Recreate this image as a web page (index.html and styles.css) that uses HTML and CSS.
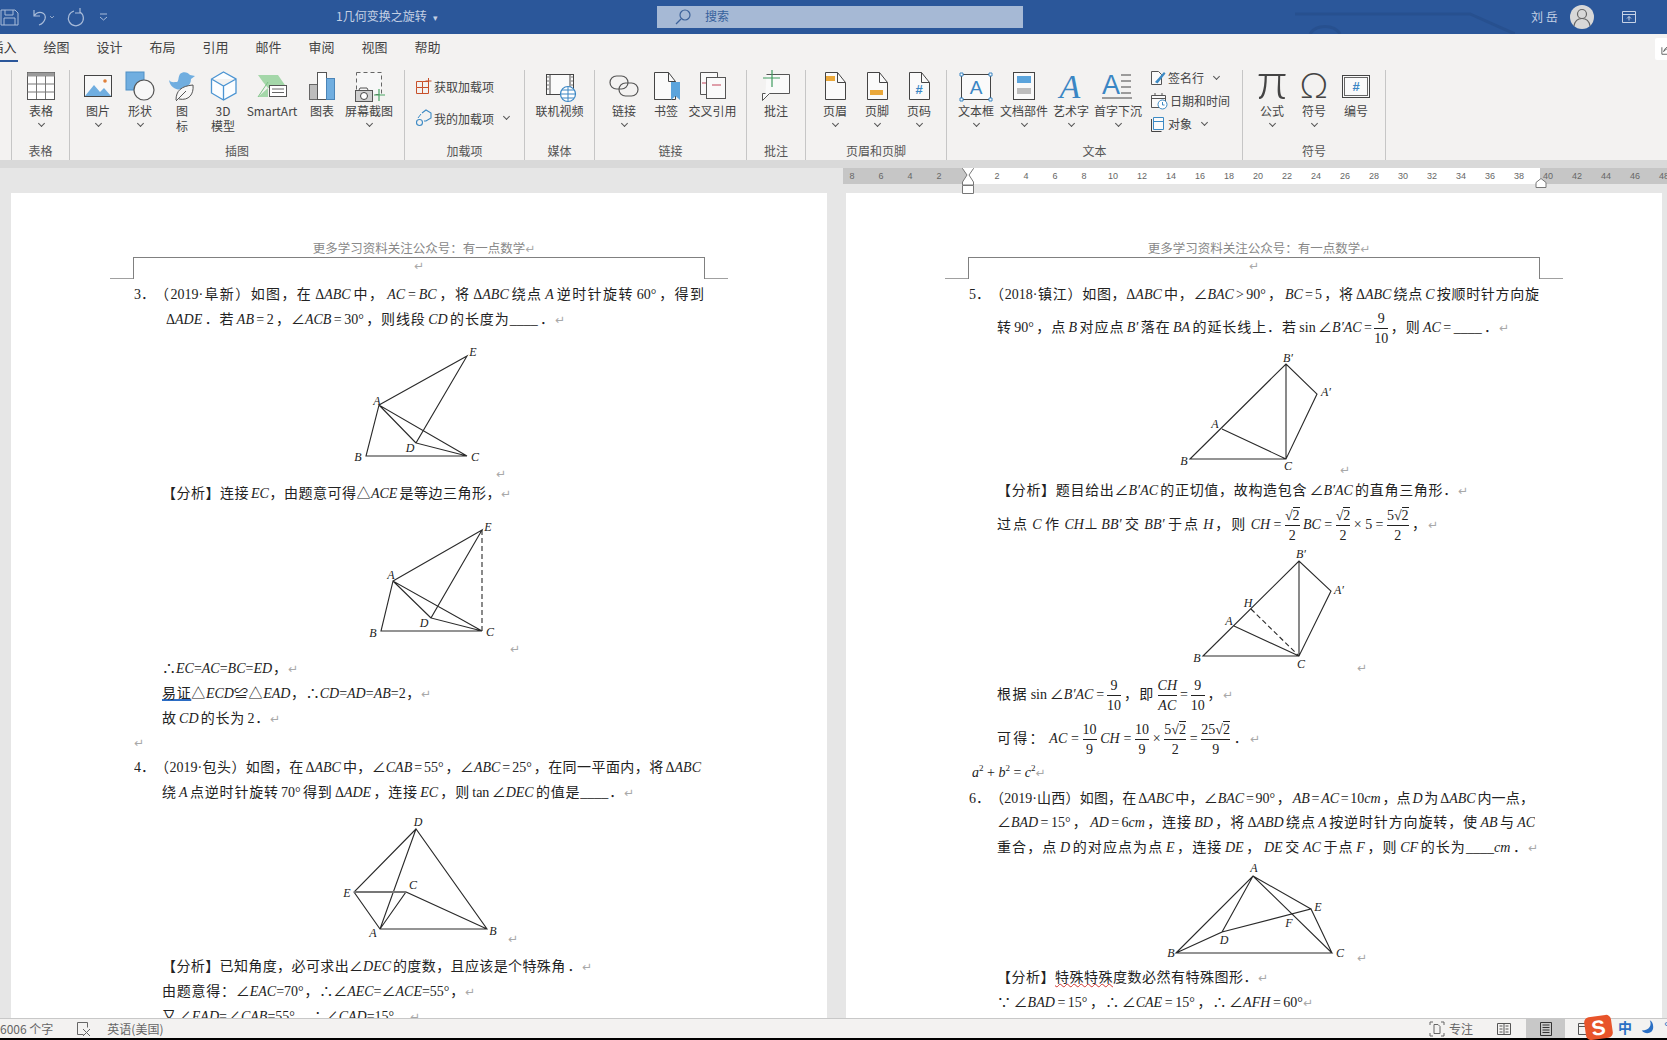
FILE: index.html
```html
<!DOCTYPE html>
<html lang="zh-CN">
  <head>
    <meta charset="UTF-8" />
    <title>1几何变换之旋转 - Word</title>
    <link rel="stylesheet" href="styles.css">
  </head>
  <body>
    <header class="titlebar">
      <div class="qat">
        <svg class="qat-save" width="20" height="20" viewBox="0 0 20 20"><path d="M1 3h14l3 3v12H1zM5 3v5h8V3M4 18v-7h11v7" fill="none" stroke="#a9bcd9"/></svg>
        <svg width="26" height="20" viewBox="0 0 26 20"><path d="M3 3v6h6M3 9c4-6 13-4 11 3-1 3-3 5-6 6" fill="none" stroke="#a9bcd9" stroke-width="1.2"/><path d="M19 9l2 2 2-2" fill="none" stroke="#8ea5c8"/></svg>
        <svg class="qat-redo" width="22" height="20" viewBox="0 0 22 20"><path d="M9 4a7.500 7.500 0 1 0 6 1M15 1v5h-5" fill="none" stroke="#a9bcd9" stroke-width="1.2"/></svg>
        <svg class="qat-more" width="12" height="20" viewBox="0 0 12 20"><path d="M2 7h7M2 10l3.500 3L9 10" fill="none" stroke="#a9bcd9"/></svg>
      </div>
      <div class="doc-title">1几何变换之旋转 <span class="caret">▾</span></div>
      <div class="search">
        <svg width="18" height="18" viewBox="0 0 18 18"><circle cx="11" cy="7" r="5" fill="none" stroke="#3d6299" stroke-width="1.200"/><path d="M7 11l-5 5" stroke="#3d6299" stroke-width="1.200"/></svg>
        <span class="search-text">搜索</span>
      </div>
      <svg class="title-art" width="220" height="34" viewBox="0 0 220 34"><path d="M0 14h175l45 20M15 34c6-10 24-10 30 0" fill="none" stroke="#27508f" stroke-width="3"/></svg>
      <div class="user">
        <span class="user-name">刘 岳</span>
        <span class="avatar"><svg width="24" height="24" viewBox="0 0 24 24"><circle cx="12" cy="9" r="4.500" fill="none" stroke="#666" stroke-width="1.200"/><path d="M4 21c1-6 4-7.500 8-7.500s7 1.500 8 7.500" fill="none" stroke="#666" stroke-width="1.200"/></svg></span>
        <svg class="display-opt" width="16" height="14" viewBox="0 0 16 14"><path d="M1.500 1.500h13v11h-13zM1.500 4.500h13M8 6.500v4M6 8.500l2-2 2 2" fill="none" stroke="#c6d2e6"/></svg>
      </div>
    </header>

    <nav class="tabs">
      <span class="tab active">插入</span>
      <span class="tab">绘图</span>
      <span class="tab">设计</span>
      <span class="tab">布局</span>
      <span class="tab">引用</span>
      <span class="tab">邮件</span>
      <span class="tab">审阅</span>
      <span class="tab">视图</span>
      <span class="tab">帮助</span>
      <span class="share"><svg width="16" height="16" viewBox="0 0 16 16"><path d="M1 6v8h12M3 11c1-4 4-6 8-6V2l5 4-5 4V7c-3 0-6 1-8 4z" fill="none" stroke="#555"/></svg></span>
    </nav>

    <section class="ribbon">
      <div class="group g-start"></div>

      <div class="group g-table">
        <div class="group-body">
          <div class="btn w58">
            <svg class="icon" viewBox="0 0 36 34"><rect x="4.500" y="2.500" width="27" height="27" fill="#fff" stroke="#555"/><rect x="4.500" y="2.500" width="27" height="4" fill="#9a9a9a"/><path d="M4.500 14h27M4.500 22h27M13.500 6v23M22.500 6v23" stroke="#777"/></svg>
            <span class="label">表格</span><i class="chev"></i>
          </div>
        </div>
        <div class="group-label">表格</div>
      </div>

      <div class="group g-illus">
        <div class="group-body">
          <div class="btn">
            <svg class="icon" viewBox="0 0 36 34"><rect x="4.500" y="5.500" width="27" height="21" fill="#f8f8f8" stroke="#444"/><path d="M5 26l9-11 6 7 4-4 7 8z" fill="#70aee0"/><circle cx="25" cy="11" r="1.800" fill="#e0803a"/></svg>
            <span class="label">图片</span><i class="chev"></i>
          </div>
          <div class="btn">
            <svg class="icon" viewBox="0 0 36 34"><rect x="4" y="2" width="18" height="18" fill="#70aee0" stroke="#4f8fc6"/><circle cx="22" cy="20" r="10" fill="#f7f7f7" stroke="#555" stroke-width="1.200"/></svg>
            <span class="label">形状</span><i class="chev"></i>
          </div>
          <div class="btn">
            <svg class="icon" viewBox="0 0 36 34"><path d="M5 10c2 3 5 2 8 2 2-1 1-5 3-8 3-3 8-2 10 1l5 1-4 3c0 4-2 6-3 7-4 5-17 6-19-6z" fill="#70aee0"/><path d="M12 30c0-9 5-14 17-15 1 9-4 16-14 14" fill="#f7f7f7" stroke="#555"/><path d="M12 31l10-10" stroke="#555"/></svg>
            <span class="label">图<br>标</span>
          </div>
          <div class="btn w40">
            <svg class="icon" viewBox="0 0 36 34"><path d="M18.500 2L31 9v14l-12.500 7L6.500 23V9zM6.500 9l12 7 12.500-7M18.500 16v14" fill="#fbfdff" stroke="#4b94d2" stroke-width="1.300"/></svg>
            <span class="label">3D<br>模型</span>
          </div>
          <div class="btn w58">
            <svg class="icon" viewBox="0 0 36 34"><path d="M4 5h20l9 13H14l-5-6z M4 27l10-9v9z" fill="#a4d7a9"/><path d="M4 27l10-15" stroke="#7cc285"/><rect x="15.500" y="15.500" width="17" height="11" fill="#fff" stroke="#555"/><path d="M18 19h12M18 22.500h12" stroke="#666"/></svg>
            <span class="label">SmartArt</span>
          </div>
          <div class="btn">
            <svg class="icon" viewBox="0 0 36 34"><rect x="5.500" y="14.500" width="8" height="15" fill="#bdbdbd" stroke="#666"/><rect x="13.500" y="2.500" width="9" height="27" fill="#fff" stroke="#555"/><rect x="22.500" y="8.500" width="8" height="21" fill="#70aee0" stroke="#4b85b8"/></svg>
            <span class="label">图表</span>
          </div>
          <div class="btn w52">
            <svg class="icon" viewBox="0 0 36 34"><rect x="5.500" y="2.500" width="25" height="22" fill="#f7f7f7" stroke="#666" stroke-dasharray="4 3"/><rect x="4.500" y="20.500" width="17" height="11" fill="#cfcfcf" stroke="#555"/><circle cx="13" cy="26" r="3.500" fill="#fff" stroke="#444"/><path d="M8 20l1-2h7l1 2" fill="none" stroke="#555"/><path d="M28 19v12M23 25h11" stroke="#4aa564" stroke-width="1.200"/></svg>
            <span class="label">屏幕截图</span><i class="chev"></i>
          </div>
        </div>
        <div class="group-label">插图</div>
      </div>

      <div class="group g-addin">
        <div class="small-col addin-col">
          <div class="small-row">
            <svg width="16" height="18" viewBox="0 0 16 18"><path d="M.5 4.500h6v6h-6zM6.500 4.500h6v12h-12v-6M6.500 10.500v6M12.500 10.500h-6M12.500 1v6M9.500 4h6" fill="none" stroke="#c8502a"/></svg>
            <span>获取加载项</span>
          </div>
          <div class="small-row">
            <svg width="16" height="18" viewBox="0 0 16 18"><path d="M6 4l4-3 5 3v5l-5 3H8" fill="none" stroke="#3c8ac4" stroke-width="1.100"/><circle cx="3.500" cy="13.500" r="3" fill="none" stroke="#3c8ac4" stroke-width="1.100"/><path d="M2 9l3-4" stroke="#3c8ac4"/></svg>
            <span>我的加载项</span><i class="chev chev-side"></i>
          </div>
        </div>
        <div class="group-label">加载项</div>
      </div>

      <div class="group g-media">
        <div class="group-body center">
          <div class="btn w70">
            <svg class="icon" viewBox="0 0 36 34"><rect x="4.500" y="4.500" width="27" height="20" fill="#fafafa" stroke="#444"/><path d="M8 4.500v20M28 4.500v20" stroke="#444"/><path d="M5 7h2M5 11h2M5 15h2M5 19h2M29 7h2M29 11h2M29 15h2" stroke="#777"/><circle cx="26" cy="24" r="7.500" fill="#fff" stroke="#3a86c4" stroke-width="1.200"/><path d="M18.500 24h15M26 16.500v15M20 20h12M20 28h12" stroke="#3a86c4"/></svg>
            <span class="label">联机视频</span>
          </div>
        </div>
        <div class="group-label">媒体</div>
      </div>

      <div class="group g-links">
        <div class="group-body">
          <div class="btn">
            <svg class="icon" viewBox="0 0 36 34"><rect x="4" y="6" width="18" height="13" rx="6.500" fill="none" stroke="#555" stroke-width="1.200"/><rect x="13" y="13" width="19" height="13" rx="6.500" fill="none" stroke="#555" stroke-width="1.200"/></svg>
            <span class="label">链接</span><i class="chev"></i>
          </div>
          <div class="btn">
            <svg class="icon" viewBox="0 0 36 34"><path d="M6.500 2.500h14l7 9v18h-21z" fill="#fafafa" stroke="#444"/><path d="M20.500 2.500v9h7" fill="none" stroke="#444"/><path d="M23 12h9v18l-4.500-4-4.500 4z" fill="#5ba4dc"/></svg>
            <span class="label">书签</span>
          </div>
          <div class="btn w51">
            <svg class="icon" viewBox="0 0 36 34"><path d="M5.500 2.500h17v22h-17z" fill="#fafafa" stroke="#555"/><rect x="11.500" y="7.500" width="19" height="21" fill="#fafafa" stroke="#555"/><path d="M7 13h4M17 15h9" stroke="#c4455a" stroke-width="1.200"/></svg>
            <span class="label">交叉引用</span>
          </div>
        </div>
        <div class="group-label">链接</div>
      </div>

      <div class="group g-note">
        <div class="group-body">
          <div class="btn w58">
            <svg class="icon" viewBox="0 0 36 34"><path d="M8.500 4.500h23v19h-20l-7 7v-7h3" fill="#fafafa" stroke="#555"/><path d="M14 0v17M5 8h17" stroke="#3f9c5f" stroke-width="1.200"/></svg>
            <span class="label">批注</span>
          </div>
        </div>
        <div class="group-label">批注</div>
      </div>

      <div class="group g-hf">
        <div class="group-body">
          <div class="btn">
            <svg class="icon" viewBox="0 0 36 34"><path d="M8.500 2.500h12l8 10v17h-20z" fill="#fafafa" stroke="#444"/><path d="M20.500 2.500v10h8" fill="none" stroke="#444"/><rect x="9" y="6" width="9" height="5" fill="#eaa83a"/></svg>
            <span class="label">页眉</span><i class="chev"></i>
          </div>
          <div class="btn">
            <svg class="icon" viewBox="0 0 36 34"><path d="M8.500 2.500h12l8 10v17h-20z" fill="#fafafa" stroke="#444"/><path d="M20.500 2.500v10h8" fill="none" stroke="#444"/><rect x="11" y="20" width="13" height="5" fill="#eaa83a"/></svg>
            <span class="label">页脚</span><i class="chev"></i>
          </div>
          <div class="btn">
            <svg class="icon" viewBox="0 0 36 34"><path d="M8.500 2.500h12l8 10v17h-20z" fill="#fafafa" stroke="#444"/><path d="M20.500 2.500v10h8" fill="none" stroke="#444"/><text x="18" y="24" class="svg-hash">#</text></svg>
            <span class="label">页码</span><i class="chev"></i>
          </div>
        </div>
        <div class="group-label">页眉和页脚</div>
      </div>

      <div class="group g-text">
        <div class="group-body">
          <div class="btn w46">
            <svg class="icon" viewBox="0 0 36 34"><rect x="3.500" y="4.500" width="29" height="25" fill="#fafafa" stroke="#444"/><path d="M2 3h3v3H2zM31 3h3v3h-3zM2 28h3v3H2zM31 28h3v3h-3z" fill="#fff" stroke="#3a86c4"/><text x="18" y="24" class="svg-a">A</text></svg>
            <span class="label">文本框</span><i class="chev"></i>
          </div>
          <div class="btn w50">
            <svg class="icon" viewBox="0 0 36 34"><rect x="7.500" y="2.500" width="21" height="27" fill="#fafafa" stroke="#444"/><rect x="11" y="6" width="14" height="7" fill="#5ba4dc"/><rect x="11" y="18" width="14" height="6" fill="#bdbdbd"/></svg>
            <span class="label">文档部件</span><i class="chev"></i>
          </div>
          <div class="btn w44">
            <svg class="icon" viewBox="0 0 36 34"><text x="17" y="28" class="svg-wordart">A</text></svg>
            <span class="label">艺术字</span><i class="chev"></i>
          </div>
          <div class="btn w50">
            <svg class="icon" viewBox="0 0 36 34"><text x="11" y="24" class="svg-drop">A</text><path d="M21 5h10M21 11h10M21 17h10M21 23h10M2 28h30" stroke="#444"/></svg>
            <span class="label">首字下沉</span><i class="chev"></i>
          </div>
          <div class="small-col text-col">
            <div class="small-row">
              <svg width="16" height="16" viewBox="0 0 16 16"><path d="M1.500 1.500h7l3 3v10h-10z" fill="#fafafa" stroke="#555"/><path d="M5 12l9-10 1.500 1.500-8 10z" fill="#3c8ac4"/></svg>
              <span>签名行</span><i class="chev chev-side"></i>
            </div>
            <div class="small-row">
              <svg width="18" height="18" viewBox="0 0 18 18"><path d="M1.500 3.500h14v12h-14zM1.500 6.500h14M5 1v3M12 1v3" fill="#fafafa" stroke="#555"/><circle cx="12.500" cy="12.500" r="4.500" fill="#fff" stroke="#3c8ac4"/><path d="M12.500 10v3h2" fill="none" stroke="#3c8ac4"/></svg>
              <span>日期和时间</span>
            </div>
            <div class="small-row">
              <svg width="16" height="16" viewBox="0 0 16 16"><path d="M3.500 1.500h10v12h-10z" fill="#fafafa" stroke="#3c8ac4"/><path d="M3.500 5.500h10" stroke="#3c8ac4"/><path d="M1.500 3v12.500h10" fill="none" stroke="#444"/></svg>
              <span>对象</span><i class="chev chev-side"></i>
            </div>
          </div>
        </div>
        <div class="group-label">文本</div>
      </div>

      <div class="group g-sym">
        <div class="group-body">
          <div class="btn">
            <svg class="icon" viewBox="0 0 36 34"><text x="18" y="29" class="svg-sym svg-pi">π</text></svg>
            <span class="label">公式</span><i class="chev"></i>
          </div>
          <div class="btn">
            <svg class="icon" viewBox="0 0 36 34"><text x="18" y="28" class="svg-sym">Ω</text></svg>
            <span class="label">符号</span><i class="chev"></i>
          </div>
          <div class="btn">
            <svg class="icon" viewBox="0 0 36 34"><rect x="4.500" y="5.500" width="27" height="22" fill="#fafafa" stroke="#444"/><rect x="6.500" y="7.500" width="23" height="18" fill="none" stroke="#666"/><text x="18" y="21" class="svg-hash">#</text></svg>
            <span class="label">编号</span>
          </div>
        </div>
        <div class="group-label">符号</div>
      </div>
    </section>

    <main class="workspace">
      <div class="ruler">
        <span>8</span><span>6</span><span>4</span><span>2</span><span></span>
        <span>2</span><span>4</span><span>6</span><span>8</span><span>10</span><span>12</span>
        <span>14</span><span>16</span><span>18</span><span>20</span><span>22</span><span>24</span>
        <span>26</span><span>28</span><span>30</span><span>32</span><span>34</span><span>36</span>
        <span>38</span><span>40</span><span>42</span><span>44</span><span>46</span><span>48</span>
        <svg class="marker-first" width="14" height="29" viewBox="0 0 14 29"><path d="M1.500.5h11v3L8 10l4.500 7v3h-11v-3L6 10 1.500 3.500zM1.500 20.500h11v8h-11z" fill="#fff" stroke="#777"/></svg>
        <svg class="marker-right" width="12" height="10" viewBox="0 0 12 10"><path d="M6 .5l5 4v5H1v-5z" fill="#fff" stroke="#777"/></svg>
      </div>

      <div class="pages">
        <article class="page">
          <div class="page-head">更多学习资料关注公众号：有一点数学<span class="ret">↵</span></div>
          <div class="head-rule"><span class="ret">↵</span></div>

          <div class="ln first"><span class="num">3．</span><div class="just w549">（2019·阜新）如图，在 Δ<i>ABC</i> 中， <i>AC</i> = <i>BC</i> ，将 Δ<i>ABC</i> 绕点 <i>A</i> 逆时针旋转 60° ，得到</div></div>
          <div class="ln ind-in just w399">Δ<i>ADE</i> ．若 <i>AB</i> = 2 ，∠<i>ACB</i> = 30° ，则线段 <i>CD</i> 的长度为____ ．<span class="ret">↵</span></div>

          <svg class="fig" width="816" height="149" viewBox="11 332 816 149">
            <path class="edge" d="M379 405L467 356L416 443L467 456L379 405L366 456H467M379 405L416 443"/>
            <text x="473" y="356">E</text><text x="377" y="405">A</text><text x="358" y="461">B</text><text x="410" y="452">D</text><text x="475" y="461">C</text>
            <text x="501" y="478" class="fig-ret">↵</text>
          </svg>

          <div class="ln ind just w349">【分析】连接 <i>EC</i>，由题意可得△<i>ACE</i> 是等边三角形，<span class="ret">↵</span></div>

          <svg class="fig" width="816" height="150" viewBox="11 506 816 150">
            <path class="edge" d="M393 581L482 530L431 618L482 631L393 581L381 631H482M393 581L431 618"/>
            <path class="edge dash" d="M482 530V631"/>
            <text x="488" y="531">E</text><text x="391" y="579">A</text><text x="424" y="627">D</text><text x="373" y="637">B</text><text x="490" y="636">C</text>
            <text x="515" y="653" class="fig-ret">↵</text>
          </svg>

          <div class="ln ind just w136">∴<i>EC</i>=<i>AC</i>=<i>BC</i>=<i>ED</i>，<span class="ret">↵</span></div>
          <div class="ln ind just w269"><span class="blue-mark">易证</span>△<i>ECD</i>≌△<i>EAD</i>，∴<i>CD</i>=<i>AD</i>=<i>AB</i>=2，<span class="ret">↵</span></div>
          <div class="ln ind just w118">故 <i>CD</i> 的长为 2．<span class="ret">↵</span></div>
          <div class="ln tall-24"><span class="ret">↵</span></div>
          <div class="ln"><span class="num">4．</span><div class="just w546">（2019·包头）如图，在 Δ<i>ABC</i> 中，∠<i>CAB</i> = 55° ，∠<i>ABC</i> = 25° ，在同一平面内，将 Δ<i>ABC</i></div></div>
          <div class="ln ind just w472">绕 <i>A</i> 点逆时针旋转 70° 得到 Δ<i>ADE</i> ，连接 <i>EC</i> ，则 tan ∠<i>DEC</i> 的值是____．<span class="ret">↵</span></div>

          <svg class="fig" width="816" height="149" viewBox="11 805 816 149">
            <path class="edge" d="M416 829L354 892L380 929L487 929L416 829L380 929L406 892L487 929"/>
            <path class="edge thick" d="M354 892H406"/>
            <text x="418" y="826">D</text><text x="347" y="897">E</text><text x="413" y="889">C</text><text x="373" y="937">A</text><text x="493" y="935">B</text>
            <text x="513" y="943" class="fig-ret">↵</text>
          </svg>

          <div class="ln ind just w430">【分析】已知角度，必可求出∠<i>DEC</i> 的度数，且应该是个特殊角 ．<span class="ret">↵</span></div>
          <div class="ln ind just w313">由题意得：∠<i>EAC</i>=70°，∴∠<i>AEC</i>=∠<i>ACE</i>=55°，<span class="ret">↵</span></div>
          <div class="ln ind just w258">又 ∠<i>EAD</i>=∠<i>CAB</i>=55° ，∴∠<i>CAD</i>=15° ，<span class="ret">↵</span></div>
        </article>

        <article class="page">
          <div class="page-head">更多学习资料关注公众号：有一点数学<span class="ret">↵</span></div>
          <div class="head-rule"><span class="ret">↵</span></div>

          <div class="ln first"><span class="num">5．</span><div class="just w549">（2018·镇江）如图，Δ<i>ABC</i> 中，∠<i>BAC</i> &gt; 90° ， <i>BC</i> = 5 ，将 Δ<i>ABC</i> 绕点 <i>C</i> 按顺时针方向旋</div></div>
          <div class="ln ind tall-42 just w512">转 90° ，点 <i>B</i> 对应点 <i>B′</i> 落在 <i>BA</i> 的延长线上．若 sin ∠<i>B′AC</i> = <span class="frac"><span class="top">9</span><span>10</span></span> ，则 <i>AC</i> = ____ ．<span class="ret">↵</span></div>

          <svg class="fig" width="816" height="129" viewBox="846 350 816 129">
            <path class="edge" d="M1190 460L1286 365L1317 395L1286 460ZM1286 365V460M1222 430L1286 460"/>
            <text x="1288" y="363" >B′</text><text x="1326" y="397">A′</text><text x="1215" y="429">A</text><text x="1184" y="466">B</text><text x="1288" y="471">C</text>
            <text x="1345" y="475" class="fig-ret">↵</text>
          </svg>

          <div class="ln ind just w471">【分析】题目给出∠<i>B′AC</i> 的正切值，故构造包含 ∠<i>B′AC</i> 的直角三角形．<span class="ret">↵</span></div>
          <div class="ln ind tall-44 just w441">过点 <i>C</i> 作 <i>CH</i>⊥ <i>BB′</i> 交 <i>BB′</i> 于点 <i>H</i>，则 <i>CH</i> = <span class="frac"><span class="top"><span class="rad">√<span>2</span></span></span><span>2</span></span> <i>BC</i> = <span class="frac"><span class="top"><span class="rad">√<span>2</span></span></span><span>2</span></span> × 5 = <span class="frac"><span class="top">5<span class="rad">√<span>2</span></span></span><span>2</span></span> ，<span class="ret">↵</span></div>

          <svg class="fig" width="816" height="125" viewBox="846 547 816 125">
            <path class="edge" d="M1203 656L1299 561L1331 591L1299 656ZM1299 561V656M1234 626L1299 656"/>
            <path class="edge dash" d="M1251 609L1299 656"/>
            <text x="1301" y="558">B′</text><text x="1339" y="594">A′</text><text x="1248" y="607">H</text><text x="1229" y="625">A</text><text x="1197" y="662">B</text><text x="1301" y="668">C</text>
            <text x="1362" y="672" class="fig-ret">↵</text>
          </svg>

          <div class="ln ind tall-46 just w236">根据 sin ∠<i>B′AC</i> = <span class="frac"><span class="top">9</span><span>10</span></span> ，即 <span class="frac"><span class="top"><i>CH</i></span><span><i>AC</i></span></span> = <span class="frac"><span class="top">9</span><span>10</span></span> ，<span class="ret">↵</span></div>
          <div class="ln ind tall-42 just w263">可得： <i>AC</i> = <span class="frac"><span class="top">10</span><span>9</span></span> <i>CH</i> = <span class="frac"><span class="top">10</span><span>9</span></span> × <span class="frac"><span class="top">5<span class="rad">√<span>2</span></span></span><span>2</span></span> = <span class="frac"><span class="top">25<span class="rad">√<span>2</span></span></span><span>9</span></span> ．<span class="ret">↵</span></div>
          <div class="ln tall-26 ind-back"><i>a</i><sup>2</sup> + <i>b</i><sup>2</sup> = <i>c</i><sup>2</sup><span class="ret">↵</span></div>
          <div class="ln"><span class="num">6．</span><div class="just w544">（2019·山西）如图，在 Δ<i>ABC</i> 中，∠<i>BAC</i> = 90° ， <i>AB</i> = <i>AC</i> = 10<i>cm</i> ，点 <i>D</i> 为 Δ<i>ABC</i> 内一点，</div></div>
          <div class="ln tall-24 ind just w538">∠<i>BAD</i> = 15° ， <i>AD</i> = 6<i>cm</i> ，连接 <i>BD</i> ，将 Δ<i>ABD</i> 绕点 <i>A</i> 按逆时针方向旋转，使 <i>AB</i> 与 <i>AC</i></div>
          <div class="ln ind just w541">重合，点 <i>D</i> 的对应点为点 <i>E</i> ，连接 <i>DE</i> ， <i>DE</i> 交 <i>AC</i> 于点 <i>F</i> ，则 <i>CF</i> 的长为____<i>cm</i> ．<span class="ret">↵</span></div>

          <svg class="fig" width="816" height="105" viewBox="846 860 816 105">
            <path class="edge" d="M1176 953L1253 876L1332 953ZM1253 876L1222 932L1176 953M1222 932L1311 909L1332 953M1253 876L1311 909"/>
            <text x="1254" y="872">A</text><text x="1318" y="911">E</text><text x="1289" y="927">F</text><text x="1224" y="944">D</text><text x="1171" y="957">B</text><text x="1340" y="957">C</text>
            <text x="1362" y="962" class="fig-ret">↵</text>
          </svg>

          <div class="ln ind just w271">【分析】<span class="red-mark">特殊特殊</span>度数必然有特殊图形．<span class="ret">↵</span></div>
          <div class="ln ind just w316">∵ ∠<i>BAD</i> = 15° ，∴ ∠<i>CAE</i> = 15° ，∴ ∠<i>AFH</i> = 60°<span class="ret">↵</span></div>
        </article>
      </div>
    </main>

    <footer class="statusbar">
      <span class="status-count">6006 个字</span>
      <svg class="status-book" width="16" height="16" viewBox="0 0 16 16"><path d="M1.500 1.500h10v5M1.500 1.500v12h6M7 8l7 7M14 8l-7 7" fill="none" stroke="#666"/></svg>
      <span class="status-lang">英语(美国)</span>
      <div class="status-right">
        <svg width="16" height="16" viewBox="0 0 16 16"><path d="M1 4V1h3M12 1h3v3M15 12v3h-3M4 15H1v-3M5 3.500h4l2 2v7H5z" fill="none" stroke="#666"/></svg>
        <span class="status-focus">专注</span>
        <svg class="view-read" width="14" height="14" viewBox="0 0 14 14"><path d="M.5 1.500h13v11H.5zM7 1.500v11M2.500 4h3M2.500 7h3M2.500 10h3M8.500 4h3M8.500 7h3M8.500 10h3" fill="none" stroke="#555"/></svg>
        <span class="view-print"><svg width="12" height="14" viewBox="0 0 12 14"><path d="M.5.500h11v13H.5zM2.500 3h7M2.500 5.500h7M2.500 8h7M2.500 10.500h7" fill="none" stroke="#333"/></svg></span>
        <svg width="14" height="14" viewBox="0 0 14 14"><path d="M.5 1.500h13v11H.5zM.5 4.500h13" fill="none" stroke="#555"/></svg>
      </div>
    </footer>

    <div class="ime">
      <span class="ime-logo">S</span>
      <span class="ime-zh">中</span>
      <svg class="ime-moon" width="15" height="16" viewBox="0 0 12 14"><path d="M8 1c2 4 0 9-7 9 3 4 10 3 10-3 0-3-1-5-3-6z" fill="#2b6fc4"/></svg>
      <span class="ime-dot">°</span>
    </div>
  </body>
</html>
```

FILE: styles.css
```css
* {
  box-sizing: border-box;
}

html,
body {
  margin: 0;
  height: 100%;
}

body {
  display: flex;
  flex-direction: column;
  overflow: hidden;
  background: #e6e6e6;
  color: #444444;
  font-family: "Noto Sans CJK SC", "Open Sans", sans-serif;
  font-size: 12px;
}

/* title bar */
.titlebar {
  position: relative;
  display: flex;
  align-items: center;
  flex: none;
  height: 34px;
  background: #2b579a;
}

.qat {
  display: flex;
  align-items: center;
  gap: 5px;
  width: 336px;
}

.qat-save {
  margin-right: 6px;
}

.qat-redo {
  margin-left: 3px;
}

.qat-more {
  margin-left: 6px;
}

.doc-title {
  width: 321px;
  margin-bottom: 3px;
  color: #c4d0e4;
  font-size: 12px;
}

.caret {
  margin-left: 4px;
  font-size: 9px;
}

.search {
  display: flex;
  align-items: center;
  gap: 13px;
  width: 366px;
  height: 22px;
  padding-left: 17px;
  background: #a6b9d5;
  color: #37619c;
  font-size: 12px;
}

.search-text {
  margin-bottom: 3px;
}

.title-art {
  position: absolute;
  top: 0;
  left: 1295px;
}

.user {
  position: relative;
  display: flex;
  align-items: center;
  margin-left: 508px;
  color: #c4d0e4;
}

.user-name {
  width: 39px;
  margin-bottom: 2px;
}

.avatar {
  display: flex;
  align-items: center;
  justify-content: center;
  width: 24px;
  height: 24px;
  border-radius: 50%;
  background: #d8d8d8;
}

.display-opt {
  margin-left: 27px;
}

/* tabs */
.tabs {
  display: flex;
  flex: none;
  height: 32px;
  margin-left: -23px;
  padding-top: 3px;
  background: #f3f2f1;
}

.tab {
  display: flex;
  justify-content: center;
  width: 53px;
  color: #444444;
  font-size: 13px;
  line-height: 19px;
}

.tab.active {
  position: relative;
  color: #333333;
}

.tab.active::after {
  content: "";
  position: absolute;
  left: 13px;
  right: 12px;
  top: 23px;
  height: 2px;
  background: #2b579a;
}

.share {
  display: flex;
  align-items: center;
  height: 22px;
  margin: 1px -8px 0 auto;
  padding-left: 6px;
  width: 20px;
  background: #ffffff;
  border-radius: 2px;
}

/* ribbon */
.ribbon {
  display: flex;
  flex: none;
  height: 102px;
  padding: 4px 0 8px;
  background: linear-gradient(#f3f2f1 94px, #d9d9d9 94px);
}

.group {
  display: flex;
  flex-direction: column;
  border-right: 1px solid #c6c6c6;
}

.group-body {
  display: flex;
  flex: 1;
}

.group-body.center {
  justify-content: center;
}

.group-label {
  flex: none;
  height: 16px;
  color: #555555;
  line-height: 14px;
  text-align: center;
}

.g-start { width: 12px; }
.g-table { width: 58px; }
.g-illus { width: 335px; }
.g-illus .group-body { padding-left: 7px; }
.g-addin { width: 120px; }
.g-media { width: 70px; }
.g-links { width: 152px; }
.g-links .group-body { padding-left: 8px; }
.g-note { width: 59px; }
.g-hf { width: 141px; }
.g-hf .group-body { padding-left: 8px; }
.g-text { width: 296px; }
.g-text .group-body { padding-left: 6px; }
.g-sym { width: 143px; }
.g-sym .group-body { padding-left: 8px; }

.btn {
  display: flex;
  flex-direction: column;
  align-items: center;
  flex: none;
  width: 42px;
  white-space: nowrap;
  text-align: center;
}

.w40 { width: 40px; }
.w44 { width: 44px; }
.w46 { width: 46px; }
.w50 { width: 50px; }
.w51 { width: 51px; }
.w52 { width: 52px; }
.w58 { width: 58px; }
.w70 { width: 70px; }

.icon {
  flex: none;
  width: 36px;
  height: 34px;
  overflow: visible;
}

.label {
  margin-top: -1px;
  color: #444444;
  line-height: 15px;
}

.chev {
  display: block;
  width: 5px;
  height: 5px;
  margin-top: 3px;
  border-right: 1px solid #555555;
  border-bottom: 1px solid #555555;
  transform: rotate(45deg);
}

.small-col {
  display: flex;
  flex-direction: column;
  flex: 1;
}

.small-row {
  display: flex;
  align-items: center;
  gap: 2px;
  white-space: nowrap;
}

.addin-col {
  padding: 5px 0 0 11px;
  gap: 10px;
}

.addin-col .small-row {
  height: 22px;
}

.text-col {
  margin-top: -4px;
  padding-left: 7px;
}

.text-col .small-row {
  height: 23px;
}

.chev-side {
  margin: -3px 0 0 8px;
}

.svg-hash {
  fill: #3a86c4;
  font-family: "Liberation Sans", sans-serif;
  font-size: 13px;
  font-weight: bold;
  text-anchor: middle;
}

.svg-a {
  fill: #3a86c4;
  font-family: "Liberation Sans", sans-serif;
  font-size: 19px;
  text-anchor: middle;
}

.svg-wordart {
  fill: #3a86c4;
  font-family: "Liberation Serif", serif;
  font-size: 34px;
  font-style: italic;
  text-anchor: middle;
}

.svg-drop {
  fill: #3a86c4;
  font-family: "Liberation Sans", sans-serif;
  font-size: 27px;
  text-anchor: middle;
}

.svg-sym {
  fill: #444444;
  font-family: "Lato", "Liberation Sans", sans-serif;
  font-size: 36px;
  font-weight: 300;
  text-anchor: middle;
}

.svg-pi {
  font-size: 52px;
}

/* ruler and document */
.workspace {
  flex: 1;
  min-height: 0;
  overflow: hidden;
}

.ruler {
  position: relative;
  display: flex;
  height: 16px;
  margin-left: 843px;
  background: linear-gradient(90deg, #c6c6c6 125px, #ffffff 125px, #ffffff 697px, #c6c6c6 697px);
  color: #666666;
  font-family: "Liberation Sans", sans-serif;
  font-size: 9px;
  line-height: 16px;
}

.ruler span {
  flex: none;
  width: 29px;
  text-align: center;
}

.ruler span:first-child {
  margin-left: -5.500px;
}

.marker-first {
  position: absolute;
  top: -3px;
  left: 118px;
}

.marker-right {
  position: absolute;
  top: 10px;
  left: 692px;
}

.pages {
  display: flex;
  gap: 19px;
  height: 100%;
  margin-top: 9px;
  padding-left: 11px;
}

.page {
  flex: none;
  width: 816px;
  height: 900px;
  padding: 47px 123px 0;
  background: #ffffff;
  color: #222222;
  font-family: "Liberation Serif", "Noto Sans CJK SC", "DejaVu Sans", serif;
  font-size: 14px;
}

.page-head {
  padding-left: 10px;
  color: #888888;
  font-family: "Noto Sans CJK SC", sans-serif;
  font-size: 12.500px;
  line-height: 16px;
  text-align: center;
}

.head-rule {
  position: relative;
  height: 22px;
  margin: 0 -1px 3px;
  border: 1px solid #808080;
  border-bottom: 0;
  line-height: 16px;
  text-align: center;
}

.head-rule::before,
.head-rule::after {
  content: "";
  position: absolute;
  bottom: 0;
  width: 23px;
  border-top: 1px solid #a0a0a0;
}

.head-rule::before {
  left: -24px;
}

.head-rule::after {
  right: -24px;
}

.ret {
  color: #a8a8a8;
  font-family: "DejaVu Sans", sans-serif;
  font-size: 12px;
  font-weight: normal;
}

/* document lines */
.ln {
  height: 25px;
  line-height: 25px;
  overflow: hidden;
}

.ln:has(.num) {
  display: flex;
}

.num {
  flex: none;
  width: 21px;
}

.ind {
  margin-left: 28px;
}

.ind-in {
  margin-left: 32px;
}

.ind-back {
  margin-left: 3px;
}

.just {
  text-align: justify;
  text-align-last: justify;
  word-spacing: -2px;
}

.w118 { width: 118px; }
.w136 { width: 136px; }
.w236 { width: 236px; }
.w258 { width: 258px; }
.w263 { width: 263px; }
.w269 { width: 269px; }
.w271 { width: 271px; }
.w313 { width: 313px; }
.w316 { width: 316px; }
.w349 { width: 349px; }
.w399 { width: 399px; }
.w430 { width: 430px; }
.w441 { width: 441px; }
.w471 { width: 471px; }
.w472 { width: 472px; }
.w512 { width: 512px; }
.w538 { width: 538px; }
.w541 { width: 541px; }
.w544 { width: 544px; }
.w546 { width: 546px; }
.w549 { width: 549px; }

.tall-24 { height: 24px; line-height: 24px; }
.tall-26 { height: 26px; line-height: 26px; }
.tall-42 { height: 42px; line-height: 42px; }
.tall-44 { height: 44px; line-height: 44px; }
.tall-46 { height: 46px; line-height: 46px; }

.page i {
  font-style: italic;
}

.page sup {
  font-size: 9px;
  line-height: 0;
}

.frac {
  display: inline-flex;
  flex-direction: column;
  vertical-align: middle;
  line-height: 19px;
  text-align: center;
  text-align-last: center;
}

.frac .top {
  border-bottom: 1px solid #222222;
}

.rad span {
  border-top: 1px solid #222222;
}

.blue-mark {
  text-decoration: underline #2b6cc4 2px;
}

.red-mark {
  text-decoration: underline wavy #d0342c 1px;
}

.fig {
  display: block;
  flex: none;
  margin-left: -123px;
}

.fig text {
  fill: #222222;
  font-family: "Liberation Serif", serif;
  font-size: 12px;
  font-style: italic;
  text-anchor: middle;
}

.fig .fig-ret {
  fill: #a8a8a8;
  font-family: "DejaVu Sans", sans-serif;
  font-size: 12px;
  font-style: normal;
}

.edge {
  fill: none;
  stroke: #2a2a2a;
  stroke-width: 1.100;
}

.dash {
  stroke-dasharray: 5 3;
}

.thick {
  stroke: #777777;
  stroke-width: 2;
}

/* status bar */
.statusbar {
  position: relative;
  display: flex;
  align-items: center;
  flex: none;
  height: 22px;
  background: #f3f2f1;
  border-top: 1px solid #c8c8c8;
  border-bottom: 2px solid #000000;
  color: #666666;
}

.status-book {
  margin-left: 23px;
}

.status-lang {
  margin-left: 15px;
}

.status-right {
  display: flex;
  align-items: center;
  margin-left: auto;
  padding-right: 75px;
}

.status-focus {
  margin: 0 24px 0 4px;
}

.view-print {
  display: flex;
  align-items: center;
  justify-content: center;
  width: 39px;
  height: 19px;
  margin: 0 13px 0 15px;
  background: #c8c8c8;
}

/* input method bar over the status bar */
.ime {
  position: absolute;
  right: 0;
  bottom: 0;
  display: flex;
  align-items: center;
  gap: 6px;
  height: 26px;
}

.ime-logo {
  display: flex;
  align-items: center;
  justify-content: center;
  width: 27px;
  height: 23px;
  border-radius: 5px;
  background: #e8542a;
  color: #ffffff;
  font-family: "Liberation Sans", sans-serif;
  font-size: 21px;
  font-weight: bold;
  transform: rotate(-8deg);
}

.ime-zh {
  width: 15px;
  color: #2b6fc4;
  font-size: 14px;
  font-weight: bold;
}

.ime-moon {
  margin: 0 3px 0 1px;
}

.ime-dot {
  width: 3px;
  color: #2b6fc4;
  font-family: "Liberation Sans", sans-serif;
  font-size: 14px;
}
```
